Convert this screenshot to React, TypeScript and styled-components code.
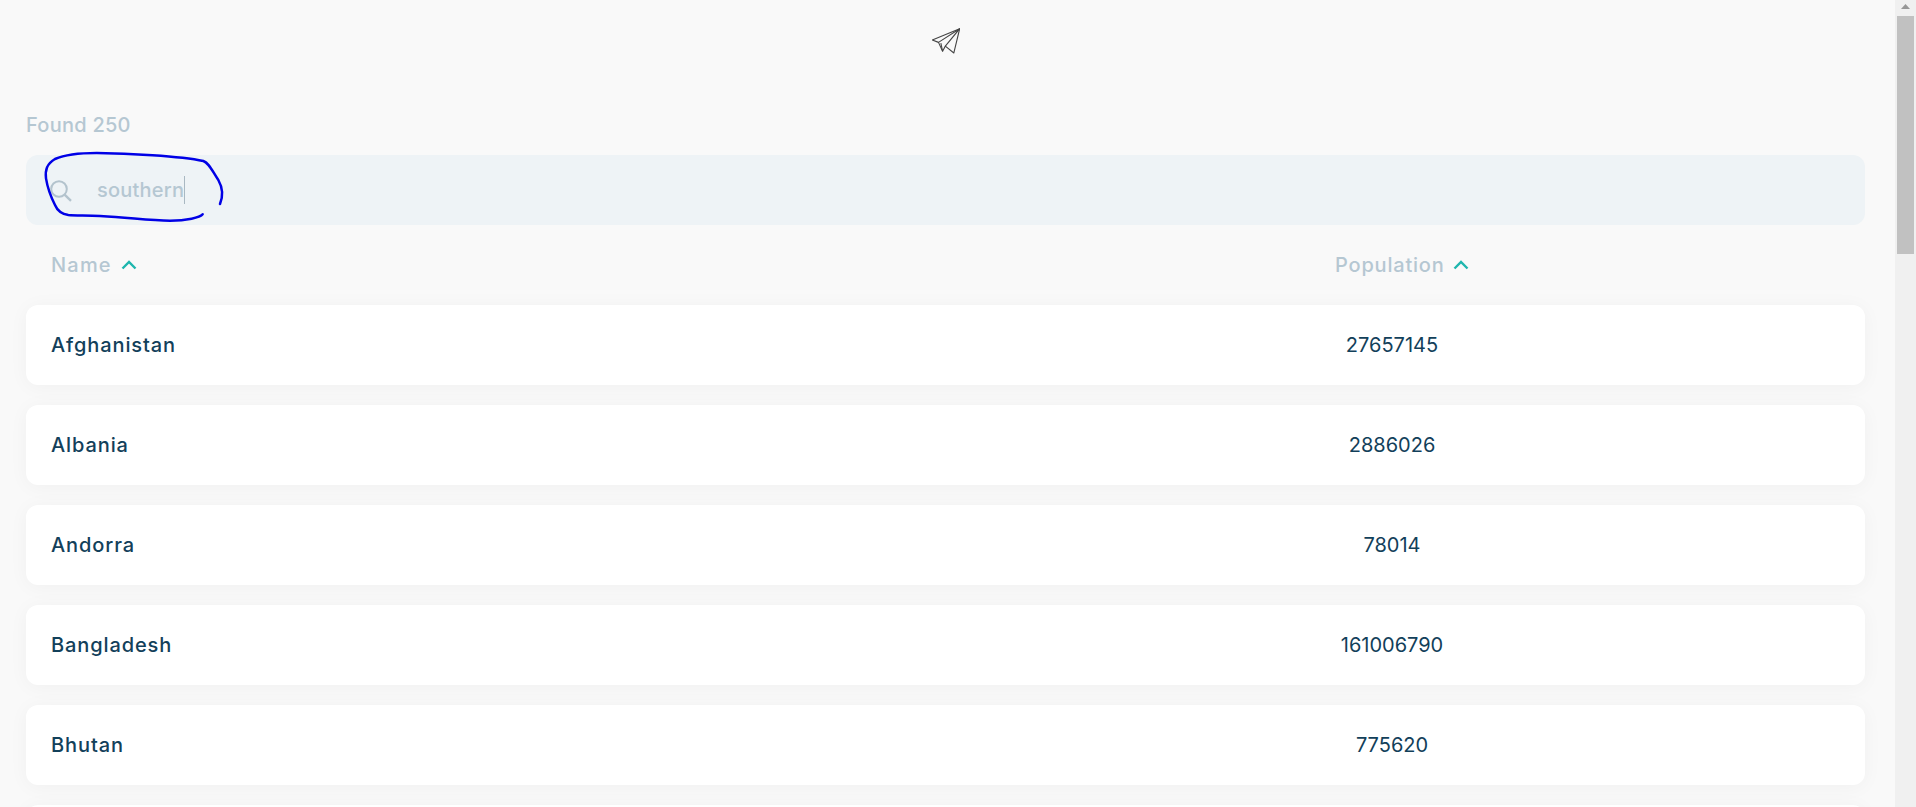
import React from "react";
import styled, { createGlobalStyle } from "styled-components";

const GlobalStyle = createGlobalStyle`
  html, body { height: 100%; }
  body { margin: 0; background: #f9f9f9; font-family: "Inter", "Noto Sans", sans-serif; overflow: hidden; }
`;

const Shell = styled.div`
  display: flex;
  height: 100vh;
  overflow: hidden;
`;

const Page = styled.main`
  flex: 1;
  min-width: 0;
  padding: 0 30px 0 26px;
`;

const ScrollTrack = styled.div`
  flex: none;
  display: flex;
  flex-direction: column;
  align-items: center;
  width: 21px;
  background: #f0f0f0;
`;

const ScrollArrow = styled.svg`
  flex: none;
  display: block;
`;

const ScrollThumb = styled.div`
  flex: none;
  width: 17px;
  height: 238px;
  background: #c1c1c1;
`;

const Brand = styled.header`
  display: flex;
  justify-content: center;
  padding-top: 28px;
  height: 81px;
  box-sizing: border-box;
`;

const Found = styled.div`
  height: 74px;
  padding-top: 31px;
  box-sizing: border-box;
  font-size: 20px;
  line-height: 26px;
  font-weight: 500;
  letter-spacing: 0.25px;
  color: #b5c7d2;
`;

const SearchBar = styled.div`
  position: relative;
  display: flex;
  align-items: center;
  height: 70px;
  box-sizing: border-box;
  padding-left: 24px;
  background: #eef3f6;
  border-radius: 12px;
`;

const SearchGlyph = styled.svg`
  flex: none;
  display: block;
  margin-top: 1px;
`;

const SearchText = styled.span`
  margin-left: 25px;
  font-size: 20px;
  font-weight: 500;
  line-height: 28px;
  letter-spacing: 0.2px;
  color: #b5c7d2;
  border-right: 1px solid #a9b8c2;
`;

const Scribble = styled.svg`
  position: absolute;
  left: -26px;
  top: -65px;
  pointer-events: none;
`;

const HeaderRow = styled.div`
  display: grid;
  grid-template-columns: minmax(0, 1fr) 114px 391px;
  align-items: center;
  height: 80px;
  padding: 0 25px;
`;

const HeaderCell = styled.div<{ $tracking: number; $gap: number }>`
  display: flex;
  align-items: center;
  gap: ${(p) => p.$gap}px;
  white-space: nowrap;
  font-size: 20px;
  font-weight: 500;
  letter-spacing: ${(p) => p.$tracking}px;
  color: #b5c7d2;
`;

const ChevronIcon = styled.svg`
  flex: none;
  display: block;
`;

const List = styled.div`
  display: flex;
  flex-direction: column;
  gap: 20px;
`;

const Row = styled.div`
  display: grid;
  grid-template-columns: minmax(0, 1fr) 114px 391px;
  align-items: center;
  height: 80px;
  padding: 0 25px;
  background: #fff;
  border-radius: 12px;
  box-shadow: 0 2px 20px rgba(0, 0, 0, 0.04);
  font-size: 20px;
  color: #12405a;
`;

const Label = styled.div`
  font-weight: 450;
  letter-spacing: 0.9px;
`;

const Value = styled.div`
  text-align: center;
  white-space: nowrap;
  font-weight: 400;
`;

const Chevron = () => (
  <ChevronIcon width="16" height="10" viewBox="0 0 16 10" fill="none">
    <path d="M1.5 8.5L8 2l6.5 6.5" stroke="#1fb6ae" strokeWidth="2.4" />
  </ChevronIcon>
);

const countries: [string, string][] = [
  ["Afghanistan", "27657145"],
  ["Albania", "2886026"],
  ["Andorra", "78014"],
  ["Bangladesh", "161006790"],
  ["Bhutan", "775620"],
  ["", ""],
];

export default function App() {
  return (
    <Shell>
      <GlobalStyle />
      <Page>
        <Brand>
          <svg width="28" height="26" viewBox="96 56 82 74" fill="none" stroke="#444" strokeWidth="3.2" strokeLinejoin="round">
            <path d="M177 57L97 90l18 7 12 26 8-15 25 20z" />
            <path d="M115 97l62-40-42 51" />
            <path d="M127 123l-5-24" />
          </svg>
        </Brand>
        <Found>Found 250</Found>
        <SearchBar>
          <SearchGlyph width="22" height="22" viewBox="0 0 22 22" fill="none" stroke="#b3c3cd">
            <circle cx="9" cy="9" r="7.8" strokeWidth="2" />
            <path d="M14.6 14.6L21 20.8" strokeWidth="2.4" />
          </SearchGlyph>
          <SearchText>southern</SearchText>
          <Scribble width="300" height="200" viewBox="0 0 900 600" fill="none">
            <path
              d="M608 373C600 383 560 392 510 392C450 392 400 384 300 378C260 376 225 377 205 375C185 372 172 362 165 345C155 325 142 290 138 265C135 240 140 222 165 207C190 196 230 189 290 189C380 190 540 198 610 213C628 220 635 240 655 270C672 300 668 322 660 342"
              stroke="#0000e6"
              strokeWidth="7.5"
              strokeLinecap="round"
            />
          </Scribble>
        </SearchBar>
        <HeaderRow>
          <HeaderCell $tracking={1.2} $gap={9}>
            Name <Chevron />
          </HeaderCell>
          <HeaderCell $tracking={0.8} $gap={8}>
            Population <Chevron />
          </HeaderCell>
        </HeaderRow>
        <List>
          {countries.map(([name, population], i) => (
            <Row key={i}>
              <Label>{name}</Label>
              <Value>{population}</Value>
            </Row>
          ))}
        </List>
      </Page>
      <ScrollTrack>
        <ScrollArrow width="21" height="16" viewBox="0 0 21 16">
          <path d="M6 9l4.5-5 4.5 5z" fill="#979797" />
        </ScrollArrow>
        <ScrollThumb />
      </ScrollTrack>
    </Shell>
  );
}
